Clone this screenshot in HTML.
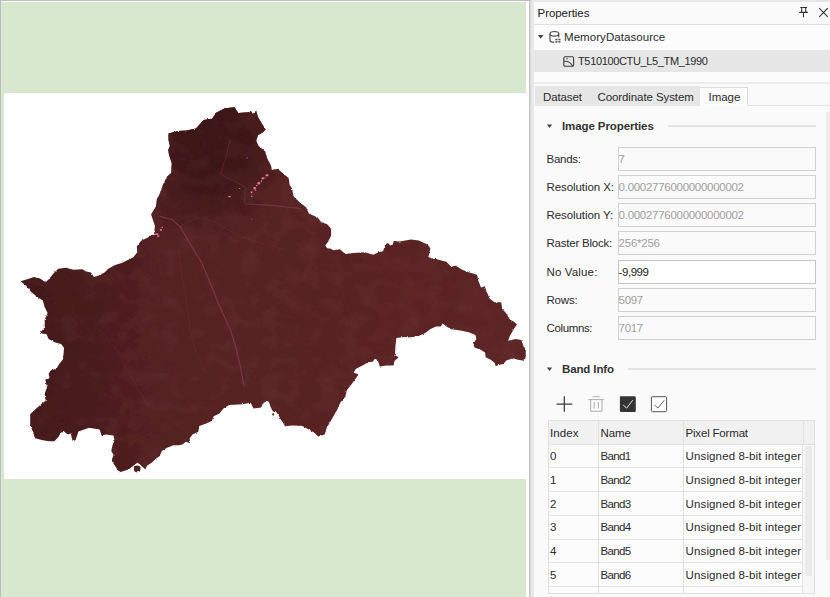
<!DOCTYPE html>
<html><head><meta charset="utf-8"><title>Properties</title>
<style>
html,body{margin:0;padding:0}
body{width:830px;height:597px;overflow:hidden;position:relative;background:#fafafa;font-family:"Liberation Sans",sans-serif;font-size:11.5px;color:#2b2b2b}
.abs{position:absolute}
.t{position:absolute;white-space:nowrap;line-height:16px;height:16px}
.inp{position:absolute;left:618px;width:196px;height:22px;border:1px solid #d0d0d0;background:#fafafa}
.inp span{position:absolute;left:-0.4px;top:3px;line-height:16px;color:#a0a0a0;white-space:nowrap}
.lbl{left:546.5px}
.hl{position:absolute;background:#e0e0e0;height:1px}
.vl{position:absolute;background:#e0e0e0;width:1px}
</style></head><body>
<!-- map view -->
<div class="abs" id="view" style="left:0;top:0;width:529px;height:597px;background:#fff"></div>
<div class="abs" style="left:0;top:0;width:531px;height:1px;background:#bebebe"></div>
<div class="abs" style="left:0;top:0;width:1px;height:597px;background:#bdbdbd"></div>
<div class="abs" style="left:1px;top:2px;width:525px;height:595px;background:#d7e8ce"></div>
<div class="abs" style="left:4px;top:93px;width:522px;height:386px;background:#fff"></div>
<svg class="abs" style="left:0;top:0" width="529" height="597" viewBox="0 0 529 597">
<defs>
<clipPath id="cp"><polygon points="20.6,281.3 27.3,279.3 34.1,277 39.9,278.4 45.7,282.2 49.5,278.4 53.4,273.6 58.2,268.7 65.9,267.8 73.6,269.7 82.3,269.3 86.1,271.6 91,272.6 93.9,277 98.7,275.5 104.5,272.6 108.3,268.7 115.1,264.9 121.8,263 127.6,260.1 133.4,257.2 137.2,252.3 136.8,246.6 141.1,240.8 146.9,237.9 151.7,235 154,234.6 154.9,225.9 151.1,214.3 155.9,206.6 156.9,198.9 159.3,195 163.1,184.5 167,176.7 171.2,172.9 171.8,163.3 168.9,154.6 168.3,149.8 169.9,145.9 168.5,140.1 168.5,133.4 177.6,130.9 186.3,130.5 195.9,128.6 203.6,119.9 212.3,118.5 216.1,112.7 224.8,108.3 234.5,107.3 238.3,113.1 248,112.2 250.8,110.8 252.8,114.1 256.2,110.8 258,117 261.4,122.8 265.7,129.5 263.4,132 258,135.3 256.2,141.1 258.6,145.9 265.3,151.7 267.2,158.4 271.1,166.1 271.7,170 277.8,169 282.7,172.9 284.8,175.1 288.7,178 289.6,184.7 292,188.6 293.5,196.3 299.3,202 306,207.3 308.9,213.6 317.6,217.5 321.4,222.3 327.2,224.2 331.1,229 331.1,235.8 328.2,241.6 325.3,245.4 327.2,248.3 331.1,248.7 333,250.2 339.8,249.3 345.5,254.1 353.3,253.1 364.8,252.2 373.5,254.7 378.3,252.2 383.1,251.2 385.1,244.5 388,243.1 390.3,245.4 392.8,244.5 393.7,241 399.5,241.6 411.1,239.6 418.8,240.6 427.5,244.5 430.4,248.3 429.4,253.1 428.4,257 434.2,258.9 435.7,258.9 446.3,261.8 451.1,266.6 455.9,265.7 461.7,269.5 469.4,272.4 477.1,274.7 478.1,280.1 481,287.4 484.8,286.3 486.7,291.7 489.6,298.4 494.5,302.3 501.2,302.3 502.2,309 506,312.9 509.9,319.6 513.7,321.6 517,324.5 513.7,329.3 509.9,336 508,340.8 515.7,338.9 521.4,339.9 523.6,346.6 525.9,349.5 525.5,358.2 522.7,360.5 517.8,359.7 513,358.2 506.3,360.5 503.4,364 498.6,364.9 495.7,366.3 494.7,363 490.8,359.7 485.6,357.2 485.1,352.4 480.2,349.5 474.5,347.6 473.1,343.7 476.4,338.9 475.4,335.1 468.7,332.2 459,330.2 451.3,329.3 446.5,326.4 442.7,323.5 440.7,326.4 435.9,326.4 430.1,329.3 425.3,333.1 418.6,336 408.9,337.6 404.1,337 396.4,338 395.4,346.6 395,355.3 398.7,357.2 394.5,361.1 393.5,365.5 386.5,365.4 379.8,366.6 377.8,360.2 374.9,358.7 373,361.6 368.2,362.2 363.4,365.1 355.7,368.9 353.7,372.8 358.6,374.3 355.7,378.6 350.8,385.3 347,390.1 345.1,396.9 340.2,402.7 337.3,409.4 333.5,416.1 329.6,422.9 326.7,427.7 324.8,434.5 318.1,436.4 314.2,432.5 307.5,428.7 301.7,425.8 292,425.4 285.3,426.2 280.5,419 278.6,415.2 275.7,411.3 273,411.5 270.8,407.5 268.9,401.7 266,400.7 262.2,404.6 261.2,407.5 253.5,408.4 250.6,402.7 242.7,404.3 229.2,405.1 223.4,408.6 219.5,413.4 213.7,416.3 211.8,421.1 205.1,424 199.3,425.9 198.3,431.7 192.5,434.6 189.6,438.4 190.2,443.3 185.8,441.7 182.9,444.2 179,445.2 173.3,445.2 166.5,448.1 161.7,451 160.1,455.8 155.9,458.7 152,462.5 147.2,465.4 145.3,469.3 141.4,466 137.6,462.5 133.7,465.4 128.9,469.3 123.1,471.2 119.3,472.2 115.4,466.4 111.6,460.6 113.5,454.8 111.2,451 112.5,445.2 114.5,440.4 113.5,435.5 105.8,434.6 101.6,435.4 99.6,429.6 89,427.7 84.2,429.6 78.4,431.6 75.5,440.2 72.7,441.2 70.7,433.5 67.8,434.5 64,431.6 61.1,432.5 58.2,437.3 54.3,441.2 48.6,441.2 41.8,439.9 35.1,438.3 33.1,432.5 30.2,424.8 30.2,414.2 35.1,409.4 40.8,404.6 45.7,400.7 44.7,394 47,387.2 45.3,379.5 49.5,378.6 48.6,373.7 51.4,369.9 56.3,368.9 59.2,364.1 63,359.3 63.6,353.5 64,347.7 61.1,343.9 55.3,342.5 48.6,339.1 46.6,334.3 39.9,332.9 44.7,327.5 44.7,319.8 47.6,313.1 44.7,307.3 42.8,300.5 37,296.7 31.2,291.9 26.4,286.1"/><circle cx="137.2" cy="468.9" r="3.3"/><circle cx="273.2" cy="414.4" r="1.1"/></clipPath>
<radialGradient id="g1" gradientUnits="userSpaceOnUse" cx="207" cy="138" r="108" gradientTransform="translate(207 138) scale(0.8 1) translate(-207 -138)"><stop offset="0" stop-color="#3a1516"/><stop offset="0.45" stop-color="#3e1718" stop-opacity="0.95"/><stop offset="0.8" stop-color="#431a1b" stop-opacity="0.45"/><stop offset="1" stop-color="#481b1d" stop-opacity="0"/></radialGradient>
<linearGradient id="g0" gradientUnits="userSpaceOnUse" x1="20" y1="0" x2="527" y2="0"><stop offset="0" stop-color="#43191a"/><stop offset="0.15" stop-color="#491b1d"/><stop offset="0.26" stop-color="#532021"/><stop offset="0.45" stop-color="#562222"/><stop offset="0.75" stop-color="#5a2324"/><stop offset="1" stop-color="#5c2526"/></linearGradient>
<filter id="rough" x="0" y="0" width="529" height="597" filterUnits="userSpaceOnUse"><feTurbulence type="fractalNoise" baseFrequency="0.45" numOctaves="2" seed="7" result="n"/><feDisplacementMap in="SourceGraphic" in2="n" scale="2.2" xChannelSelector="R" yChannelSelector="G"/></filter>
<filter id="tex" x="0" y="90" width="529" height="400" filterUnits="userSpaceOnUse"><feTurbulence type="fractalNoise" baseFrequency="0.05 0.07" numOctaves="4" seed="3" result="t"/><feColorMatrix in="t" type="matrix" values="0 0 0 0 0.42  0 0 0 0 0.17  0 0 0 0 0.19  1.4 0 0 0 -0.5"/></filter>
<filter id="soft" x="0" y="90" width="529" height="400" filterUnits="userSpaceOnUse"><feGaussianBlur stdDeviation="0.6"/></filter>
</defs>
<g filter="url(#rough)"><g clip-path="url(#cp)">
<rect x="0" y="90" width="529" height="400" fill="url(#g0)"/>
<rect x="0" y="90" width="529" height="400" fill="url(#g1)"/>
<rect x="0" y="90" width="529" height="400" filter="url(#tex)" opacity="0.14"/>
</g></g>
<g clip-path="url(#cp)">
<g fill="none" stroke="#96435f" stroke-linecap="round" stroke-linejoin="round" filter="url(#soft)">
<path d="M160 216.5L172 219.5L180 226.5L188.2 240.6L195 252L200.2 260L207.7 277L214 292L218.5 304L225 318L230.5 330L236 348L240 365L244 386" stroke-width="1.2" opacity="0.6"/>
<path d="M245.5 204L260 204.6L274.8 205.6L290 207.5L300 208.4" stroke-width="1.1" opacity="0.5"/>
<path d="M230 140L226.4 156L220.4 174.2L234.4 181.2L245.5 187.3L244.5 202.4" stroke-width="1" opacity="0.32"/>
<path d="M180 226.5L190 221L199.7 217L215 222L230 231L242.6 237L262 243L285 250" stroke-width="0.9" opacity="0.22"/>
<path d="M178 248L181 270L185 292L187.6 309.4L190 330L196 352L205 372" stroke-width="0.9" opacity="0.22"/>
<path d="M218.5 304L232 300L250 305L270 312L292 318" stroke-width="0.8" opacity="0.16"/>
<path d="M100 330L118 352L128 372L140 392L150 410" stroke-width="0.9" opacity="0.22"/>
<path d="M128 372L150 366L172 372L196 380" stroke-width="0.8" opacity="0.16"/>
<path d="M330 262L338 280L345 300L352 322L350 345" stroke-width="0.8" opacity="0.16"/>
<path d="M64 300L78 318L92 334L100 330L110 320" stroke-width="0.8" opacity="0.16"/>
</g>
<g fill="#ee7aa4">
<rect x="251.2" y="195.6" width="1.2" height="1.4"/><rect x="250.8" y="191.4" width="1.6" height="1.8"/><rect x="253.6" y="187" width="2.2" height="2.4"/><rect x="256" y="185" width="1.4" height="1.2"/><rect x="257.4" y="182.2" width="2.8" height="2.2"/><rect x="260.8" y="180.4" width="1.4" height="1.4"/><rect x="261.6" y="177.4" width="2.4" height="1.8"/><rect x="265.6" y="174.4" width="2.8" height="1.8"/><rect x="264.4" y="177.6" width="1.2" height="1"/><rect x="255" y="189.6" width="1.2" height="1"/>
<rect x="228.4" y="196" width="2.4" height="1.2"/><rect x="239" y="188" width="1.2" height="0.8"/><rect x="246.6" y="157.4" width="1" height="1"/><rect x="251.2" y="219.2" width="0.9" height="0.9" opacity="0.7"/>
<rect x="155.2" y="233.4" width="3" height="1.6"/><rect x="157.2" y="235.4" width="2" height="1.4"/><rect x="159.8" y="229.2" width="2.2" height="1.4"/><rect x="161.6" y="226.8" width="1.2" height="1.2"/>
</g>
</g>
</svg>
<!-- splitter -->
<div class="abs" style="left:529px;top:1px;width:2px;height:596px;background:linear-gradient(90deg,#c4c4c4 0,#c4c4c4 1.4px,#d8d8d8 1.4px)"></div>
<div class="abs" style="left:531px;top:1px;width:3px;height:596px;background:#e8e8e8"></div>
<!-- panel -->
<div class="abs" id="panel" style="left:534px;top:1px;width:296px;height:596px;background:#fafafa"></div>

<!-- title bar -->
<div class="abs" style="left:531px;top:0px;width:299px;height:2px;background:#e6e6e6"></div>
<div class="abs" style="left:534px;top:24px;width:296px;height:1px;background:#e0e0e0"></div>
<div class="t" id="ttl" style="letter-spacing:-0.07px;left:537.6px;top:5px;color:#222">Properties</div>
<svg class="abs" style="left:796px;top:4px" width="34" height="18" viewBox="796 4 34 18">
<path d="M800.3 7.5H807 M801.7 7.5V12.4 M805.7 7.5V12.4 M799.2 12.4H807.9 M803.5 12.4V17.3" stroke="#333" stroke-width="1.1" fill="none"/>
<path d="M819.2 8.2L827.8 16.8 M827.8 8.2L819.2 16.8" stroke="#333" stroke-width="1.1" fill="none"/>
</svg>
<!-- tree -->
<div class="abs" style="left:534px;top:25px;width:296px;height:57px;background:#fcfcfc"></div>
<div class="abs" style="left:534px;top:50px;width:296px;height:22px;background:#e6e6e6"></div>
<svg class="abs" style="left:536px;top:28px" width="60" height="42" viewBox="536 28 60 42">
<path d="M537.9 35.1H543.5L540.7 38.8Z" fill="#444"/>
<g stroke="#4a4a4a" stroke-width="1.1" fill="none">
<path d="M550 33.8V40.2Q550 42.1 552.2 42.1H554.2 M558.8 33.8V37.4"/>
<ellipse cx="554.4" cy="33.8" rx="4.4" ry="2.3"/>
</g>
<g fill="#4a4a4a"><rect x="555.4" y="38.8" width="2.1" height="1.5"/><rect x="558.4" y="38.8" width="2.1" height="1.5"/><rect x="555.4" y="41.1" width="2.1" height="1.5"/><rect x="558.4" y="41.1" width="2.1" height="1.5"/></g>
<g stroke="#3c3c3c" stroke-width="1.1" fill="none"><rect x="563.8" y="56.7" width="9.8" height="9.6" rx="1.3"/><path d="M564 61.2Q570.3 61 572.6 66"/></g>
<circle cx="567" cy="58.8" r="0.7" fill="#3c3c3c"/>
</svg>
<div class="t" id="mds" style="letter-spacing:0.06px;left:564px;top:29px">MemoryDatasource</div>
<div class="t" id="tnm" style="letter-spacing:-0.35px;font-size:11px;left:578px;top:53px">T510100CTU_L5_TM_1990</div>
<!-- tabs -->
<div class="abs" style="left:534px;top:82px;width:296px;height:2px;background:#ececec"></div>
<div class="abs" style="left:535px;top:86px;width:165px;height:20px;background:#e6e6e6"></div>
<div class="abs" style="left:700px;top:87px;width:48px;height:19px;background:#fcfcfc;border-top:1px solid #dcdcdc;border-right:1px solid #dcdcdc;box-sizing:border-box"></div>
<div class="abs" style="left:747px;top:105px;width:83px;height:1px;background:#e2e2e2"></div>
<div class="t" id="tb1" style="letter-spacing:-0.133px;left:543px;top:89px">Dataset</div>
<div class="t" id="tb2" style="letter-spacing:-0.094px;left:597.5px;top:89px">Coordinate System</div>
<div class="t" id="tb3" style="letter-spacing:-0.025px;left:708.5px;top:89px">Image</div>
<!-- outer scrollbar -->
<div class="abs" style="left:826px;top:112px;width:4px;height:448px;background:#ececec"></div>
<!-- Image Properties -->
<svg class="abs" style="left:545px;top:120px" width="12" height="12" viewBox="545 120 12 12"><path d="M546.9 124.4H552.1L549.5 127.9Z" fill="#444"/></svg>
<div class="t" id="h1" style="letter-spacing:-0.1px;left:562px;top:118px;font-weight:bold;color:#333">Image Properties</div>
<div class="hl" style="left:668px;top:125px;width:148px;height:2px;background:#e3e3e3"></div>
<div class="t lbl" id="l0" style="letter-spacing:-0.26px;top:151px">Bands:</div>
<div class="inp" style="top:147px"><span id="v0" style="letter-spacing:0.0px">7</span></div>
<div class="t lbl" id="l1" style="letter-spacing:-0.075px;top:179px">Resolution X:</div>
<div class="inp" style="top:175px"><span id="v1" style="letter-spacing:-0.285px">0.0002776000000000002</span></div>
<div class="t lbl" id="l2" style="letter-spacing:-0.075px;top:207px">Resolution Y:</div>
<div class="inp" style="top:203px"><span id="v2" style="letter-spacing:-0.285px">0.0002776000000000002</span></div>
<div class="t lbl" id="l3" style="letter-spacing:-0.217px;top:235px">Raster Block:</div>
<div class="inp" style="top:231px"><span id="v3" style="letter-spacing:-0.25px">256*256</span></div>
<div class="t lbl" id="l4" style="letter-spacing:0.15px;top:264px">No Value:</div>
<div class="inp" style="top:260px;background:#fff;border-color:#c6c6c6"><span id="v4" style="letter-spacing:-0.46px;color:#222">-9,999</span></div>
<div class="t lbl" id="l5" style="letter-spacing:-0.2px;top:292px">Rows:</div>
<div class="inp" style="top:288px"><span id="v5" style="letter-spacing:-0.333px">5097</span></div>
<div class="t lbl" id="l6" style="letter-spacing:-0.371px;top:320px">Columns:</div>
<div class="inp" style="top:316px"><span id="v6" style="letter-spacing:-0.333px">7017</span></div>
<!-- Band Info -->
<svg class="abs" style="left:545px;top:363px" width="12" height="12" viewBox="545 363 12 12"><path d="M546.9 367.4H552.1L549.5 370.9Z" fill="#444"/></svg>
<div class="t" id="h2" style="letter-spacing:-0.125px;left:562px;top:361px;font-weight:bold;color:#333">Band Info</div>
<div class="hl" style="left:628px;top:368px;width:188px;height:2px;background:#e3e3e3"></div>
<svg class="abs" style="left:552px;top:392px" width="120" height="24" viewBox="552 392 120 24">
<path d="M564.3 396.3V411.7 M556.5 404H572.2" stroke="#3a3a3a" stroke-width="1.25" fill="none"/>
<g stroke="#adadad" stroke-width="1" fill="none"><path d="M588.2 399.6H603.9 M592.7 396.7H599.6 M590.6 399.6V411.3H602V399.6 M594.2 402V408.6 M598.4 402V408.6"/></g>
<rect x="619.9" y="396.2" width="15.9" height="15.8" rx="1.2" fill="#343434"/>
<path d="M623.2 405L626.6 408.1L632.8 400.2" stroke="#e8e8e8" stroke-width="1" fill="none"/>
<rect x="651.4" y="396.7" width="15.2" height="15" rx="1.2" fill="#fcfcfc" stroke="#555" stroke-width="1"/>
<path d="M654.6 405L658 408.1L664.2 400.2" stroke="#666" stroke-width="1" fill="none"/>
</svg>
<!-- table -->
<div class="abs" id="tbl" style="left:548px;top:420px;width:267px;height:174px;background:#fcfcfc"></div>
<div class="abs" style="left:548px;top:421px;width:267px;height:23px;background:#f1f1f1"></div>
<div class="abs" style="left:803px;top:445px;width:11px;height:148px;background:#f7f7f7"></div>
<div class="abs" style="left:805px;top:446px;width:7px;height:130px;background:#ebebeb"></div>
<div class="hl" style="left:548px;top:420px;width:267px"></div>
<div class="hl" style="left:548px;top:593px;width:267px"></div>
<div class="vl" style="left:548px;top:420px;height:174px"></div>
<div class="vl" style="left:598px;top:420px;height:174px"></div>
<div class="vl" style="left:683px;top:420px;height:174px"></div>
<div class="vl" style="left:803px;top:420px;height:25px"></div>
<div class="vl" style="left:802px;top:445px;height:148px;background:#e4e4e4"></div>
<div class="vl" style="left:814px;top:420px;height:174px"></div>
<div class="hl" style="left:548px;top:444px;width:267px"></div>
<div class="hl" style="left:548px;top:467px;width:255px"></div>
<div class="hl" style="left:548px;top:491px;width:255px"></div>
<div class="hl" style="left:548px;top:515px;width:255px"></div>
<div class="hl" style="left:548px;top:539px;width:255px"></div>
<div class="hl" style="left:548px;top:562px;width:255px"></div>
<div class="hl" style="left:548px;top:586px;width:255px"></div>
<div class="t" id="c0" style="letter-spacing:0.075px;left:550px;top:425px">Index</div><div class="t" id="c1" style="letter-spacing:-0.1px;left:600.5px;top:425px">Name</div><div class="t" id="c2" style="letter-spacing:-0.182px;left:685.5px;top:425px">Pixel Format</div>
<div class="t" id="r0a" style="left:550px;top:448px">0</div><div class="t" id="r0b" style="letter-spacing:-0.66px;left:600.5px;top:448px">Band1</div><div class="t" id="r0c" style="letter-spacing:0.143px;left:685.5px;top:448px">Unsigned 8-bit integer</div>
<div class="t" id="r1a" style="left:550px;top:472px">1</div><div class="t" id="r1b" style="letter-spacing:-0.66px;left:600.5px;top:472px">Band2</div><div class="t" id="r1c" style="letter-spacing:0.143px;left:685.5px;top:472px">Unsigned 8-bit integer</div>
<div class="t" id="r2a" style="left:550px;top:496px">2</div><div class="t" id="r2b" style="letter-spacing:-0.66px;left:600.5px;top:496px">Band3</div><div class="t" id="r2c" style="letter-spacing:0.143px;left:685.5px;top:496px">Unsigned 8-bit integer</div>
<div class="t" id="r3a" style="left:550px;top:519px">3</div><div class="t" id="r3b" style="letter-spacing:-0.66px;left:600.5px;top:519px">Band4</div><div class="t" id="r3c" style="letter-spacing:0.143px;left:685.5px;top:519px">Unsigned 8-bit integer</div>
<div class="t" id="r4a" style="left:550px;top:543px">4</div><div class="t" id="r4b" style="letter-spacing:-0.66px;left:600.5px;top:543px">Band5</div><div class="t" id="r4c" style="letter-spacing:0.143px;left:685.5px;top:543px">Unsigned 8-bit integer</div>
<div class="t" id="r5a" style="left:550px;top:567px">5</div><div class="t" id="r5b" style="letter-spacing:-0.66px;left:600.5px;top:567px">Band6</div><div class="t" id="r5c" style="letter-spacing:0.143px;left:685.5px;top:567px">Unsigned 8-bit integer</div>
</body></html>
